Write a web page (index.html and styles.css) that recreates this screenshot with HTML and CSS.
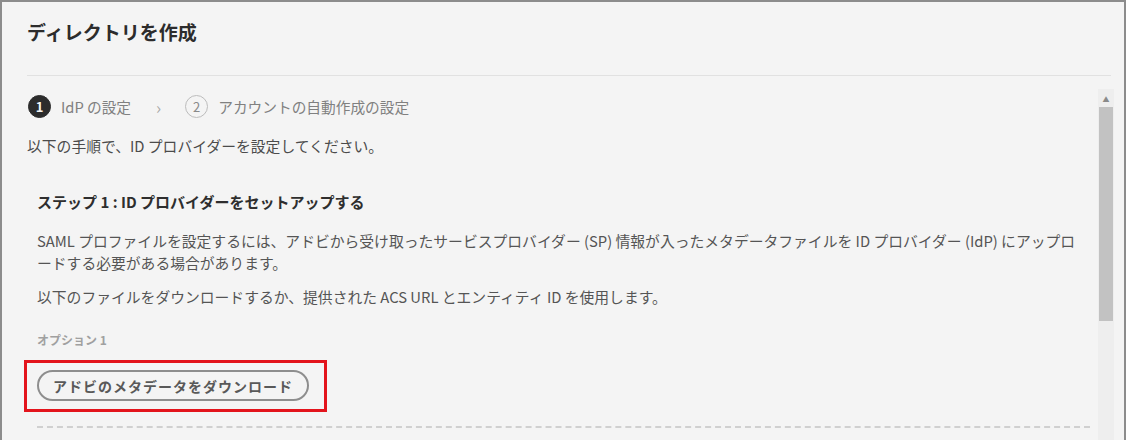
FILE: index.html
```html
<!DOCTYPE html>
<html lang="ja">
<head>
    <meta charset="UTF-8">
    <title>ディレクトリを作成</title>
    <link rel="stylesheet" href="styles.css">
</head>
<body>
<div class="dialog">
    <header class="dialog-head">
        <h1>ディレクトリを作成</h1>
    </header>

    <div class="dialog-body">
        <div class="content">
            <ol class="steps">
                <li class="step current">
                    <span class="step-num">1</span>
                    <span class="step-label">IdP の設定</span>
                </li>
                <li class="step-sep">&rsaquo;</li>
                <li class="step">
                    <span class="step-num">2</span>
                    <span class="step-label">アカウントの自動作成の設定</span>
                </li>
            </ol>

            <p class="intro">以下の手順で、ID プロバイダーを設定してください。</p>

            <section class="setup">
                <h2>ステップ 1 : ID プロバイダーをセットアップする</h2>
                <p>SAML プロファイルを設定するには、アドビから受け取ったサービスプロバイダー (SP) 情報が入ったメタデータファイルを ID プロバイダー (IdP) にアップロードする必要がある場合があります。</p>
                <p>以下のファイルをダウンロードするか、提供された ACS URL とエンティティ ID を使用します。</p>

                <div class="option-label">オプション 1</div>
                <div class="highlight">
                    <button class="pill">アドビのメタデータをダウンロード</button>
                </div>
                <div class="dashed"></div>
            </section>
        </div>

        <div class="scrollbar">
            <span class="scroll-up">&#9650;</span>
            <div class="scroll-thumb"></div>
        </div>
    </div>
</div>
</body>
</html>
```

FILE: styles.css
```css
* {
    box-sizing: border-box;
}
html, body {
    margin: 0;
    padding: 0;
    height: 440px;
    overflow: hidden;
}
body {
    font-family: "Noto Sans CJK JP", "Noto Sans", sans-serif;
    background: #f4f4f4;
    color: #4a4a4a;
}

.dialog {
    height: 440px;
    border: 2px solid #8c8c8c;
    border-bottom: none;
    background: #f4f4f4;
    display: flex;
    flex-direction: column;
}

.dialog-head {
    margin: 0 13px 0 25px;
    padding-top: 17px;
    height: 74px;
    border-bottom: 1px solid #e1e1e1;
}
.dialog-head h1 {
    margin: 0;
    font-size: 19px;
    line-height: 26px;
    font-weight: 700;
    color: #2c2c2c;
}

.dialog-body {
    flex: 1;
    display: flex;
    min-height: 0;
    padding-top: 13px;
}
.content {
    flex: 1;
    padding-left: 25px;
    padding-right: 12px;
}

/* steps */
.steps {
    list-style: none;
    margin: 6px 0 0;
    padding: 0;
    display: flex;
    align-items: center;
    height: 22px;
    font-size: 14.7px;
    color: #808080;
}
.step {
    display: flex;
    align-items: center;
    column-gap: 10px;
}
.step-num {
    width: 23px;
    height: 23px;
    border-radius: 50%;
    border: 1.5px solid #bcbcbc;
    display: flex;
    align-items: center;
    justify-content: center;
    font-size: 13px;
    color: #8a8a8a;
    margin-left: 1px;
}
.step.current .step-num {
    background: #2c2c2c;
    border-color: #2c2c2c;
    color: #f4f4f4;
    font-size: 13px;
    font-weight: 700;
}
.step-sep {
    margin: 0 23px 0 25px;
    font-size: 17px;
    color: #a8a8a8;
}

.intro {
    margin: 18px 0 0;
    font-size: 14.8px;
    line-height: 22px;
    color: #4b4b4b;
}

/* step 1 */
.setup {
    padding-left: 10px;
    padding-top: 34px;
}
.setup h2 {
    margin: 0 0 17px;
    font-size: 15px;
    line-height: 22px;
    font-weight: 700;
    color: #2e2e2e;
}
.setup p {
    margin: 0 0 12px;
    font-size: 14.8px;
    line-height: 22px;
    color: #555;
}

.option-label {
    margin-top: 22px;
    font-size: 12px;
    font-weight: 700;
    color: #a0a0a0;
    line-height: 20px;
}

.highlight {
    display: inline-block;
    margin: 10px 0 0 -13px;
    padding: 7px 15px 8px 10px;
    border: 3px solid #e3141c;
}
.pill {
    display: block;
    height: 31px;
    padding: 0 14px;
    border: 2px solid #8e8e8e;
    border-radius: 16px;
    background: transparent;
    font-family: inherit;
    font-size: 14px;
    font-weight: 700;
    letter-spacing: 1px;
    color: #595959;
}

.dashed {
    margin-top: 14px;
    margin-right: -4px;
    border-top: 2px dashed #d0d0d0;
}

/* fake scrollbar */
.scrollbar {
    width: 16px;
    margin-right: 10px;
    background: #eeeeee;
    display: flex;
    flex-direction: column;
    align-items: center;
}
.scroll-up {
    font-size: 7px;
    line-height: 8px;
    color: #8a8a8a;
    margin-top: 6px;
}
.scroll-thumb {
    width: 14px;
    height: 214px;
    margin-top: 4px;
    background: #c2c2c2;
}
```
